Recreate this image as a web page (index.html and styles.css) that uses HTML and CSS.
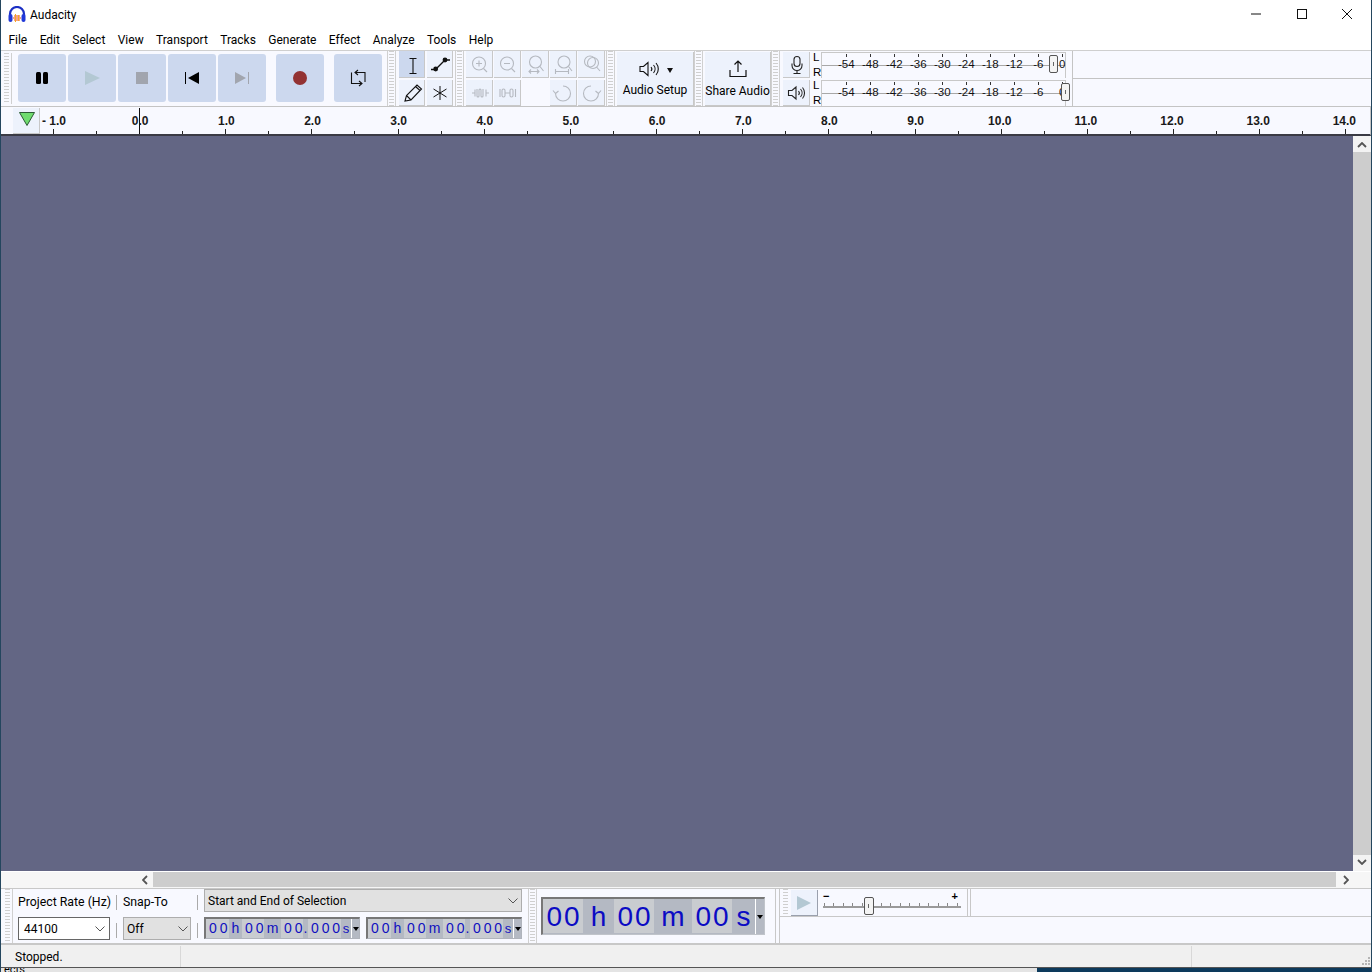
FILE: index.html
```html
<!DOCTYPE html>
<html lang="en">
<head>
<meta charset="utf-8">
<title>Audacity</title>
<link rel="stylesheet" href="styles.css">
</head>
<body>
<div class="window">
  <header class="titlebar">
    <svg class="logo" viewBox="0 0 18 17"><path d="M2 10V8a7 7 0 0 1 14 0v2" fill="none" stroke="#1b2fc4" stroke-width="2.200"/><rect x="0.500" y="8" width="4" height="8" rx="2" fill="#2038d8"/><rect x="13.500" y="8" width="4" height="8" rx="2" fill="#2038d8"/><path d="M5 12h8M6 10h6M6 14h6" stroke="#e8431c" stroke-width="1.200"/><path d="M7.500 8v8M10.500 9v6" stroke="#f5a623" stroke-width="1"/></svg>
    <span class="app-name">Audacity</span>
    <div class="win-controls">
      <button class="win-btn"><svg viewBox="0 0 10 10" width="10" height="10"><path d="M0 5h10" stroke="#111" stroke-width="1"/></svg></button>
      <button class="win-btn"><svg viewBox="0 0 10 10" width="10" height="10"><rect x=".5" y=".5" width="9" height="9" fill="none" stroke="#111"/></svg></button>
      <button class="win-btn"><svg viewBox="0 0 10 10" width="10" height="10"><path d="M0 0l10 10M10 0L0 10" stroke="#111" stroke-width="1"/></svg></button>
    </div>
  </header>

  <nav class="menubar">
    <span>File</span><span>Edit</span><span>Select</span><span>View</span><span>Transport</span><span>Tracks</span><span>Generate</span><span>Effect</span><span>Analyze</span><span>Tools</span><span>Help</span>
  </nav>

  <section class="toolbars">
    <div class="grip grip-first"></div>
    <div class="transport">
      <div class="tbtn"><svg viewBox="0 0 48 48"><rect x="18" y="18" width="5" height="12" rx="1.500"/><rect x="25" y="18" width="5" height="12" rx="1.500"/></svg></div>
      <div class="tbtn"><svg viewBox="0 0 48 48"><path d="M17 17l15 7-15 7z" fill="#b3c8d3"/></svg></div>
      <div class="tbtn"><svg viewBox="0 0 48 48"><rect x="18" y="18" width="12" height="12" fill="#a1a5ae"/></svg></div>
      <div class="tbtn"><svg viewBox="0 0 48 48"><path d="M17.500 18v12" stroke="#000" fill="none"/><path d="M31 18v12l-11-6z"/></svg></div>
      <div class="tbtn tbtn-last"><svg viewBox="0 0 48 48"><path d="M30.500 18v12" stroke="#a1a5ae" fill="none"/><path d="M17 18v12l11-6z" fill="#a1a5ae"/></svg></div>
      <div class="tbtn tbtn-last"><svg viewBox="0 0 48 48"><circle cx="24" cy="24" r="7" fill="#933232"/></svg></div>
      <div class="tbtn"><svg viewBox="0 0 48 48" fill="none" stroke="#111" stroke-width="1.100"><path d="M31 28V18.500H21M24 16l-3 2.500 3 2.500M17.500 18.500v11H28M25 27l3 2.500-3 2.500"/></svg></div>
    </div>
    <div class="grip"></div>
    <div class="tools">
      <div class="sbtn sbtn-on"><svg viewBox="0 0 26 26" fill="none" stroke="#111" stroke-width="1.100"><path d="M10.500 7.500h7M10.500 22.500h7M14 7.500v15"/></svg></div>
      <div class="sbtn"><svg viewBox="0 0 26 26" fill="none"><path d="M4 18.500h5M18 9h5M9 18l9-9" stroke="#111" stroke-width="1.400"/><circle cx="8.700" cy="18" r="2.400" fill="#111"/><circle cx="18" cy="9" r="2.400" fill="#111"/></svg></div>
      <div class="sbtn"><svg viewBox="0 0 26 26" fill="none" stroke="#111" stroke-width="1.100"><path d="M6 21l1.500-5.500L18 5l4.500 4L12 20zM7.500 15.500l4.500 4.500M16.500 6.500l4.500 4"/></svg></div>
      <div class="sbtn"><svg viewBox="0 0 26 26" fill="none" stroke="#111"><path d="M13 6v14M6.500 9l13 8M19.500 9l-13 8"/></svg></div>
    </div>
    <div class="grip"></div>
    <div class="edit-tools">
      <div class="sbtn ic-off"><svg viewBox="0 0 26 26" fill="none"><circle cx="13" cy="12.500" r="6.500"/><path d="M17.500 17.500L21 21M10 12.500h6M13 9.500v6"/></svg></div>
      <div class="sbtn ic-off"><svg viewBox="0 0 26 26" fill="none"><circle cx="13" cy="12.500" r="6.500"/><path d="M17.500 17.500L21 21M10 12.500h6"/></svg></div>
      <div class="sbtn ic-off"><svg viewBox="0 0 26 26" fill="none"><circle cx="13.500" cy="11" r="6"/><path d="M18 15.500l3.500 4.500M7 20.500h10M9 18.500l-2 2 2 2M15 18.500l2 2-2 2"/></svg></div>
      <div class="sbtn ic-off"><svg viewBox="0 0 26 26" fill="none"><circle cx="14" cy="11" r="6"/><path d="M18.500 15.500l3.500 4.500M5.500 20.500h13M5.500 18v5M18.500 18v5"/></svg></div>
      <div class="sbtn ic-off"><svg viewBox="0 0 26 26" fill="none"><circle cx="12" cy="10.500" r="5.500"/><circle cx="15" cy="12" r="5.500"/><path d="M18.500 16l3.500 4"/></svg></div>
      <div class="sbtn ic-off"><svg viewBox="0 0 26 26" fill="none"><path d="M6 13h3M20 13h3M9 9.500v7M20 9.500v7M11 9v7a1 1 0 0 0 2 0v-6a1 1 0 0 1 2 0v6a1 1 0 0 0 2 0V9"/></svg></div>
      <div class="sbtn ic-off"><svg viewBox="0 0 26 26" fill="none"><path d="M6 9v8M21.500 9v8M11 13h5"/><rect x="8" y="9" width="3" height="8" rx="1.500"/><rect x="16" y="9" width="3" height="8" rx="1.500"/></svg></div>
      <div class="sbtn-gap"></div>
      <div class="sbtn ic-off"><svg viewBox="0 0 26 26" fill="none"><path d="M13 6a7.500 7.500 0 1 1-7.500 7.500M5.500 13.500l-2.500-3M5.500 13.500l3-2.500"/></svg></div>
      <div class="sbtn ic-off"><svg viewBox="0 0 26 26" fill="none"><path d="M13 6a7.500 7.500 0 1 0 7.500 7.500M20.500 13.500l2.500-3M20.500 13.500l-3-2.500"/></svg></div>
    </div>
    <div class="grip"></div>
    <div class="big-tool audio-setup">
      <div class="speaker-line">
        <svg viewBox="0 0 24 18" width="24" height="18" fill="none" stroke="#111"><path d="M2 6.500h3.500L10 2.500v13l-4.500-4H2zM13 7a3 3 0 0 1 0 4M15.500 5a6 6 0 0 1 0 8M18 3a9 9 0 0 1 0 12" stroke-width="1.100"/></svg>
        <span class="caret"></span>
      </div>
      <span class="big-label">Audio Setup</span>
    </div>
    <div class="grip"></div>
    <div class="big-tool share-audio">
      <svg viewBox="0 0 20 20" width="20" height="20" fill="none" stroke="#111" stroke-width="1.200"><path d="M10 13V2M6.500 5.500L10 2l3.500 3.500M2 11v6.500h16V11"/></svg>
      <span class="big-label">Share Audio</span>
    </div>
    <div class="grip"></div>
    <div class="meters">
      <div class="meter-row">
        <div class="sbtn mbtn"><svg viewBox="0 0 26 26" fill="none" stroke="#222" stroke-width="1.100"><rect x="11" y="4.500" width="6" height="10" rx="3"/><path d="M9 11.500v2a5 5 0 0 0 10 0v-2M14 18.500v3M10.500 21.500h7"/></svg></div>
        <div class="lr"><span>L</span><span>R</span></div>
        <div class="meter">
          <span class="mk">-54</span><span class="mk">-48</span><span class="mk">-42</span><span class="mk">-36</span><span class="mk">-30</span><span class="mk">-24</span><span class="mk">-18</span><span class="mk">-12</span><span class="mk">-6</span><span class="mk">0</span>
          <div class="thumb thumb-rec"></div>
        </div>
      </div>
      <div class="meter-row">
        <div class="sbtn mbtn"><svg viewBox="0 0 26 26" fill="none" stroke="#222" stroke-width="1.100"><path d="M5.500 10.500H9L13 7v12l-4-3.500H5.500zM15.500 11a3 3 0 0 1 0 4M17.500 9a6 6 0 0 1 0 8M19.500 7.500a8.500 8.500 0 0 1 0 11"/></svg></div>
        <div class="lr"><span>L</span><span>R</span></div>
        <div class="meter">
          <span class="mk">-54</span><span class="mk">-48</span><span class="mk">-42</span><span class="mk">-36</span><span class="mk">-30</span><span class="mk">-24</span><span class="mk">-18</span><span class="mk">-12</span><span class="mk">-6</span><span class="mk">0</span>
          <div class="thumb thumb-play"></div>
        </div>
      </div>
    </div>
    <div class="toolbar-rest"><div></div><div></div></div>
  </section>

  <section class="ruler">
    <div class="ruler-btn"><svg viewBox="0 0 16 14" width="16" height="14"><path d="M.5 .5h15l-7.500 13z" fill="#6fdc6f" stroke="#2c5a35"/></svg></div>
    <div class="scale">
      <div class="rc"><b>- 1.0</b></div><div class="rc rc-zero"><b>0.0</b></div><div class="rc"><b>1.0</b></div><div class="rc"><b>2.0</b></div><div class="rc"><b>3.0</b></div><div class="rc"><b>4.0</b></div><div class="rc"><b>5.0</b></div><div class="rc"><b>6.0</b></div><div class="rc"><b>7.0</b></div><div class="rc"><b>8.0</b></div><div class="rc"><b>9.0</b></div><div class="rc rc-wide"><b>10.0</b></div><div class="rc rc-wide"><b>11.0</b></div><div class="rc rc-wide"><b>12.0</b></div><div class="rc rc-wide"><b>13.0</b></div><div class="rc rc-wide rc-last"><b>14.0</b></div>
    </div>
  </section>

  <section class="workspace">
    <div class="tracks"></div>
    <div class="vscroll">
      <svg class="arrow" viewBox="0 0 10 6" width="10" height="6"><path d="M1 5l4-4 4 4" fill="none" stroke="#555" stroke-width="1.800"/></svg>
      <div class="vthumb"></div>
      <svg class="arrow" viewBox="0 0 10 6" width="10" height="6"><path d="M1 1l4 4 4-4" fill="none" stroke="#555" stroke-width="1.800"/></svg>
    </div>
  </section>

  <section class="hscroll">
    <svg class="harrow" viewBox="0 0 6 10" width="6" height="10"><path d="M5 1L1 5l4 4" fill="none" stroke="#555" stroke-width="1.800"/></svg>
    <div class="hthumb"></div>
    <svg class="harrow" viewBox="0 0 6 10" width="6" height="10"><path d="M1 1l4 4-4 4" fill="none" stroke="#555" stroke-width="1.800"/></svg>
  </section>

  <section class="bottom">
    <div class="grip grip-bottom"></div>
    <div class="selection">
      <div class="sel-col col-rate">
        <span class="sel-label">Project Rate (Hz)</span>
        <div class="combo combo-white"><span>44100</span><svg viewBox="0 0 10 6" width="10" height="6"><path d="M.5 .5L5 5l4.500-4.500" fill="none" stroke="#555"/></svg></div>
      </div>
      <div class="sel-col col-snap">
        <span class="sel-label">Snap-To</span>
        <div class="combo combo-grey"><span>Off</span><svg viewBox="0 0 10 6" width="10" height="6"><path d="M.5 .5L5 5l4.500-4.500" fill="none" stroke="#555"/></svg></div>
      </div>
      <div class="sel-col col-range">
        <div class="combo combo-wide"><span>Start and End of Selection</span><svg viewBox="0 0 10 6" width="10" height="6"><path d="M.5 .5L5 5l4.500-4.500" fill="none" stroke="#555"/></svg></div>
        <div class="times">
          <div class="time"><span class="c c2 c-first">00</span><span class="c d ch">h</span><span class="c c2">00</span><span class="c d cm">m</span><span class="c c2">00</span><span class="c d cd">.</span><span class="c c3">000</span><span class="c d cs">s</span><span class="t-arrow"><i></i></span></div>
          <div class="time"><span class="c c2 c-first">00</span><span class="c d ch">h</span><span class="c c2">00</span><span class="c d cm">m</span><span class="c c2">00</span><span class="c d cd">.</span><span class="c c3">000</span><span class="c d cs">s</span><span class="t-arrow"><i></i></span></div>
        </div>
      </div>
    </div>
    <div class="grip grip-time"></div>
    <div class="clock-wrap">
      <div class="clock"><span class="k k2">00</span><span class="k kd kh">h</span><span class="k k2">00</span><span class="k kd km">m</span><span class="k k2">00</span><span class="k kd ks">s</span><span class="t-arrow k-arrow"><i></i></span></div>
    </div>
    <div class="bottom-right">
      <div class="play-speed">
        <div class="grip grip-speed"></div>
        <div class="speed-btn"><svg viewBox="0 0 16 16" width="16" height="16"><path d="M1 1l14 7-14 7z" fill="#b3c8d3"/></svg></div>
        <div class="speed">
          <div class="speed-signs"><span>&#8722;</span><span>+</span></div>
          <div class="speed-track"></div>
          <div class="thumb thumb-speed"></div>
        </div>
        <div class="speed-rest"></div>
      </div>
      <div class="bottom-blank"></div>
    </div>
  </section>

  <footer class="status">
    <span class="status-main">Stopped.</span>
    <span class="status-mid"></span>
    <span class="status-end">
      <svg viewBox="0 0 10 10" width="10" height="10"><path d="M7 1h2v2H7zM4 4h2v2H4zM7 4h2v2H7zM1 7h2v2H1zM4 7h2v2H4zM7 7h2v2H7z" fill="#b5b5b5"/></svg>
    </span>
  </footer>
  <div class="desktop"><span>ects</span><div class="desktop-dark"></div></div>
</div>
</body>
</html>
```
FILE: styles.css
```css
* { box-sizing: border-box; }
html, body { margin: 0; padding: 0; }
body { width: 1372px; height: 972px; overflow: hidden; background: #fff; font-family: Roboto, "Segoe UI", sans-serif; font-size: 12px; color: #000; }
.window { width: 1372px; height: 972px; display: flex; flex-direction: column; border-left: 1px solid #24465e; border-right: 1px solid #24465e; overflow: hidden; background: #fff; }

.titlebar { height: 30px; display: flex; align-items: center; flex: none; background: #fff; }
.logo { width: 18px; height: 17px; margin-left: 7px; margin-top: -2px; flex: none; }
.app-name { margin-left: 4px; font-size: 12px; margin-top: -1px; }
.win-controls { margin-left: auto; display: flex; align-self: flex-start; padding-right: 1px; }
.win-btn { width: 45.500px; height: 28px; border: 0; background: transparent; padding: 0; display: flex; align-items: center; justify-content: center; }

.menubar { height: 20px; flex: none; display: flex; align-items: center; gap: 12.400px; padding-left: 7.400px; font-size: 12px; }

.toolbars { height: 57px; flex: none; display: flex; background: #f8f9ff; border-top: 1px solid #cfcfcf; border-bottom: 1px solid #c4c4c4; }
.grip { flex: none; width: 9px; background-color: #f8f9ff; background-image: repeating-linear-gradient(to bottom, #cfcfcf 0 1px, transparent 1px 3px); background-size: 5px 100%; background-position: center; background-repeat: no-repeat; border-left: 1px solid #d0d0d0; border-right: 1px solid #d0d0d0; background-clip: padding-box; }
.grip-first { border-left: 0; width: 10px; margin-left: 1px; margin-top: 2px; margin-bottom: 2px; }
.transport { flex: none; width: 375px; display: flex; align-items: flex-start; gap: 2px; padding: 3px 0 0 6px; }
.tbtn { width: 48px; height: 48px; background: #ccd8ee; border-radius: 3px; flex: none; }
.tbtn svg { display: block; width: 48px; height: 48px; }
.tbtn-last { margin-right: 8px; }

.tools { flex: none; width: 59px; padding: 0 2px 0 3px; display: grid; grid-template-columns: 26px 26px; grid-template-rows: 27px 26px; column-gap: 2px; row-gap: 2px; }
.sbtn { width: 27px; height: 26px; background: #edf2fc; border-right: 1px solid #c8c8c8; border-bottom: 1px solid #c8c8c8; flex: none; }
.tools .sbtn { width: 26px; }
.tools .sbtn:nth-child(-n+2) { height: 27px; }
.sbtn svg { display: block; width: 26px; height: 26px; }
.sbtn-on { background: #ccd8ee; }
.sbtn-gap { width: 28px; height: 26px; }
.edit-tools { flex: none; width: 142px; padding-left: 2px; display: grid; grid-template-columns: repeat(5, 28px); grid-template-rows: 27px 26px; row-gap: 2px; }
.edit-tools .sbtn { width: 27px; }
.edit-tools .sbtn:nth-child(-n+5) { height: 27px; }
.ic-off svg { stroke: #b5b9c0; stroke-width: 1.100; }

.big-tool { flex: none; background: #edf2fc; border-right: 1px solid #c8c8c8; border-bottom: 1px solid #c8c8c8; display: flex; flex-direction: column; align-items: center; margin: 1px 0 0 2px; height: 54px; }
.audio-setup { width: 77px; }
.share-audio { width: 66px; padding-top: 7px; }
.speaker-line { display: flex; align-items: center; margin-top: 7px; height: 20px; gap: 5px; }
.caret { width: 0; height: 0; border-left: 3.500px solid transparent; border-right: 3.500px solid transparent; border-top: 5px solid #111; margin-top: 2px; }
.big-label { font-size: 12px; margin-top: 4px; white-space: nowrap; }
.share-audio .big-label { margin-top: 5px; }

.meters { flex: none; width: 293px; display: flex; flex-direction: column; padding-left: 3px; gap: 2px; padding-top: 1px; border-right: 1px solid #c4c4c4; }
.meter-row { display: flex; height: 26px; }
.mbtn { width: 27px; height: 26px; }
.lr { width: 12px; font: 11.500px/12px "Liberation Sans", sans-serif; padding-left: 3px; display: flex; flex-direction: column; justify-content: space-between; height: 27px; margin-top: -1px; }
.meter { position: relative; width: 245px; margin-right: 6px; flex: none; display: flex; padding-left: 12px; border: 1px solid #c8c8c8; border-bottom: 0; background-image: linear-gradient(#a8a8a8, #a8a8a8); background-size: 100% 1px; background-position: 0 12px; background-repeat: no-repeat; }
.mk { width: 24px; flex: none; text-align: center; font: 11.500px/23px "Liberation Sans", sans-serif; position: relative; color: #111; }
.mk::before { content: ""; position: absolute; left: 12px; top: 1px; width: 1px; height: 3px; background: #333; }
.thumb { position: absolute; width: 9px; height: 18px; border: 1px solid #555; border-radius: 2px; background: #f4f4f4; }
.thumb::after { content: ""; position: absolute; left: 3px; top: 6px; width: 1px; height: 4px; background: #666; }
.thumb-rec { left: 227px; top: 2px; }
.thumb-play { left: 239px; top: 2px; }
.toolbar-rest { flex: 1; display: flex; flex-direction: column; }
.toolbar-rest div { height: 28px; border-bottom: 1px solid #c4c4c4; }
.toolbar-rest div:last-child { border-bottom: 0; }

.ruler { height: 29px; flex: none; display: flex; background: #f8f9ff; border-bottom: 2px solid #3a3a44; overflow: hidden; border-right: 1px solid #c4c4c4; }
.ruler-btn { width: 27px; margin: 1px 0 0 12px; flex: none; background: #edf2fc; border-right: 1px solid #c8c8c8; border-bottom: 1px solid #c8c8c8; display: flex; align-items: center; justify-content: center; padding: 0 0 3px 2px; }
.scale { display: flex; margin-left: 13px; }
.rc { width: 86.160px; flex: none; position: relative; height: 100%; }
.rc b { position: absolute; left: 1px; top: 7px; transform: translateX(-50%); font: bold 12px/14px "Liberation Sans", sans-serif; white-space: nowrap; color: #1a1a1a; }
.rc-wide b { left: -1px; }
.rc::before { content: ""; position: absolute; left: 0; bottom: 0; width: 1px; height: 5px; background: #222; }
.rc::after { content: ""; position: absolute; left: 43px; bottom: 0; width: 1px; height: 3px; background: #222; }
.rc-zero::before { height: 26px; background: #111; width: 1px; }
.rc-last::after { display: none; }

.workspace { height: 736px; flex: none; display: flex; border-bottom: 1px solid #fff; }
.tracks { flex: 1; background: #636684; }
.vscroll { width: 18px; flex: none; background: #f3f3f3; display: flex; flex-direction: column; align-items: center; }
.arrow { flex: none; margin: 6px 0; }
.vthumb { flex: 1; width: 100%; background: #cdcdcd; margin: -2px 0; }

.hscroll { height: 16px; flex: none; display: flex; align-items: center; background: #f6f6f6; padding-left: 141px; padding-right: 22px; }
.harrow { flex: none; }
.hthumb { flex: 1; height: 15px; align-self: flex-start; background: #cdcdcd; margin: 0 7px 0 5px; }

.bottom { height: 57px; flex: none; display: flex; background: #f8f9ff; border-top: 1px solid #c8c8c8; border-bottom: 2px solid #c8c8c8; }
.grip-bottom { width: 10px; margin-left: 2px; border-left: 0; }
.selection { width: 513px; flex: none; display: flex; padding-left: 5px; }
.sel-col { display: flex; flex-direction: column; }
.sel-label { font-size: 12.300px; height: 28px; line-height: 27px; white-space: nowrap; }
.col-rate { width: 105px; position: relative; }
.col-snap { width: 81px; position: relative; }
.col-rate::after, .col-snap::after { content: ""; position: absolute; right: 6px; top: 6px; width: 1px; height: 15px; background: #aaa; }
.col-rate::before, .col-snap::before { content: ""; position: absolute; right: 6px; top: 34px; width: 1px; height: 15px; background: #aaa; }
.combo { display: flex; align-items: center; justify-content: space-between; font-size: 12px; padding: 0 4px 0 5px; height: 23px; border: 1px solid #adadad; }
.combo svg { flex: none; }
.combo-white { width: 92px; background: #fff; border-color: #666; }
.combo-grey { width: 68px; background: #e1e1e1; padding: 0 2px 0 3px; }
.combo-wide { width: 318px; background: #e1e1e1; padding: 0 3px; }
.times { display: flex; gap: 6px; margin-top: 5px; }
.time { width: 156px; height: 22px; display: flex; border: 1px solid #b0b4bc; border-top: 2px solid #777; border-left: 2px solid #777; background: #b4b9c3; color: #1010c0; font: 14px/19px "Liberation Sans", sans-serif; text-align: center; }
.c { display: block; flex: none; letter-spacing: 2.900px; padding-left: 3px; height: 19px; }
.c2 { width: 22px; background: #c9ccd0; }
.c-first { width: 23px; }
.c3 { width: 33px; background: #c9ccd0; }
.d { letter-spacing: 0; padding-left: 0; }
.ch { width: 13px; }
.cm { width: 17px; }
.cd { width: 5px; }
.cs { width: 10px; font-size: 13px; }
.t-arrow { flex: 1; background: #b4b9c3; border-left: 1px solid #fff; display: flex; justify-content: center; align-items: center; }
.t-arrow i { width: 0; height: 0; border-left: 3.500px solid transparent; border-right: 3.500px solid transparent; border-top: 4px solid #000; }

.grip-time { width: 9px; margin-left: 2px; }
.clock-wrap { width: 239px; flex: none; padding: 8px 0 0 4px; border-right: 1px solid #c8c8c8; }
.clock { width: 224px; height: 38px; display: flex; border: 1px solid #c0c4ca; border-top: 2px solid #777; border-left: 2px solid #777; background: #b4b9c3; color: #0b0bc4; font: 28px/35px "Liberation Sans", sans-serif; text-align: center; }
.k { display: block; flex: none; height: 34px; }
.k2 { width: 40px; background: #c9ccd0; letter-spacing: 2px; padding-left: 2px; }
.kh { width: 31px; }
.km { width: 38px; }
.ks { width: 23px; }
.k-arrow { width: 10px; }

.bottom-right { flex: 1; display: flex; flex-direction: column; border-left: 1px solid #c8c8c8; margin-left: 3px; }
.play-speed { height: 28px; display: flex; border-bottom: 1px solid #c8c8c8; }
.grip-speed { width: 11px; border-left: 0; border-right: 0; }
.speed-btn { width: 27px; height: 26px; margin-top: 1px; background: #edf2fc; border-right: 1px solid #9aa0ad; border-bottom: 1px solid #9aa0ad; display: flex; align-items: center; justify-content: center; flex: none; }
.speed { position: relative; width: 150px; border-right: 1px solid #c8c8c8; }
.speed-signs { display: flex; justify-content: space-between; font: bold 11px/10px "Liberation Sans", sans-serif; padding: 0 9px 0 5px; margin-top: 2px; }
.speed-track { margin: 2px 6px 0 5px; height: 5px; border-bottom: 2px solid #9a9a9a; background-image: repeating-linear-gradient(to right, #888 0 1px, transparent 1px 9.500px); background-position: 1px 0; background-repeat: no-repeat; }
.thumb-speed { left: 46px; top: 8px; width: 10px; }
.speed-rest { flex: 1; margin-left: 2px; border-left: 1px solid #c8c8c8; }
.bottom-blank { flex: 1; }

.status { height: 23px; flex: none; display: flex; background: #f0f0f0; border-bottom: 1px solid #555; padding-top: 1px; }
.status-main { width: 180px; padding-left: 14px; line-height: 23px; font-size: 12px; border-right: 1px solid #d8d8d8; }
.status-mid { width: 1011px; border-right: 1px solid #d8d8d8; }
.status-end { flex: 1; display: flex; align-items: flex-end; justify-content: flex-end; padding: 0 0 1px; }

.desktop { height: 4px; flex: none; display: flex; background: #e4e4e4; overflow: hidden; font-size: 11px; line-height: 4px; }
.desktop span { margin-left: 3px; }
.desktop-dark { margin-left: auto; width: 334px; background: #0d3a5c; }
```
